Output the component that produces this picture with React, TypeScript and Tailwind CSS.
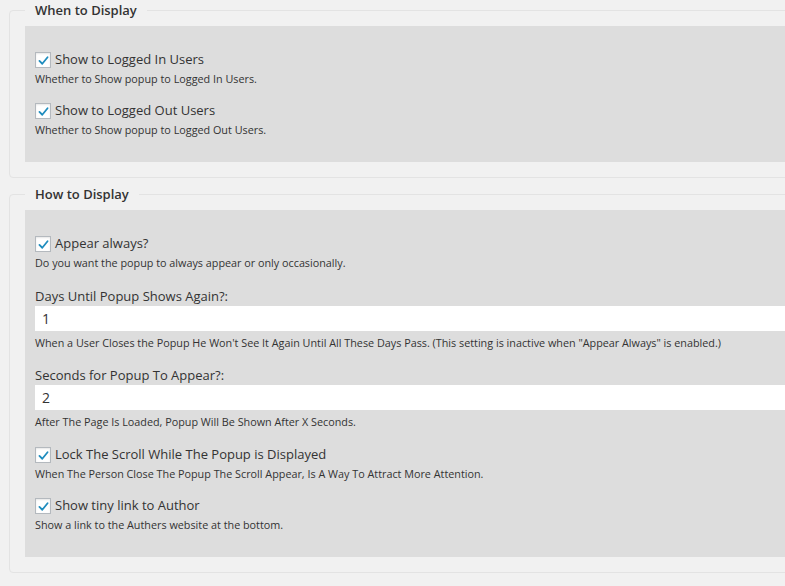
import React from 'react';

const Check: React.FC = () => (
  <span className="inline-flex h-4 w-4 shrink-0 items-center justify-center border border-[#b4b9be] bg-white shadow-[inset_0_1px_2px_rgba(0,0,0,0.1)]">
    <svg viewBox="0 0 16 16" className="h-[13px] w-[13px]">
      <path d="M3 8.5 L6.5 12 L13 4" fill="none" stroke="#1e8cbe" strokeWidth="2.2" strokeLinecap="round" strokeLinejoin="round" />
    </svg>
  </span>
);

const CheckItem: React.FC<{ label: string; desc: string; className?: string }> = ({ label, desc, className }) => (
  <div className={className}>
    <label className="flex h-5 items-center gap-1 text-[13px] text-[#333]">
      <Check />
      <span>{label}</span>
    </label>
    <p className="mt-[1px] text-[10.8px] leading-4 text-[#333]">{desc}</p>
  </div>
);

const TextItem: React.FC<{ label: string; value: string; desc: string; className?: string }> = ({ label, value, desc, className }) => (
  <div className={className}>
    <div className="h-5 text-[13px] leading-5 text-[#333]">{label}</div>
    <div className="flex h-[25px] items-center bg-white px-[7px] text-[14px] text-[#333]">{value}</div>
    <p className="mt-[4px] text-[10.8px] leading-4 text-[#333]">{desc}</p>
  </div>
);

const Section: React.FC<{ title: string; children: React.ReactNode; className?: string }> = ({ title, children, className }) => (
  <fieldset className={`w-[820px] rounded-[4px] border border-[#e3e3e3] pb-[15px] pl-[15px] ${className ?? ''}`}>
    <legend className="px-[10px] text-[13px] font-semibold leading-5 text-[#333]">{title}</legend>
    <div className="mt-[6px] bg-[#dddddd] pl-[10px] pt-[24px] pb-[24px]">{children}</div>
  </fieldset>
);

const App: React.FC = () => {
  return (
    <div className="h-[586px] w-[785px] overflow-hidden bg-[#f1f1f1] pl-[9px] font-['Open_Sans',sans-serif]">
      <Section title="When to Display">
        <CheckItem label="Show to Logged In Users" desc="Whether to Show popup to Logged In Users." />
        <CheckItem className="mt-[14px]" label="Show to Logged Out Users" desc="Whether to Show popup to Logged Out Users." />
      </Section>
      <Section title="How to Display" className="mt-[6px]">
        <CheckItem label="Appear always?" desc="Do you want the popup to always appear or only occasionally." />
        <TextItem
          className="mt-[15px]"
          label="Days Until Popup Shows Again?:"
          value="1"
          desc={'When a User Closes the Popup He Won\'t See It Again Until All These Days Pass. (This setting is inactive when "Appear Always" is enabled.)'}
        />
        <TextItem
          className="mt-[14px]"
          label="Seconds for Popup To Appear?:"
          value="2"
          desc="After The Page Is Loaded, Popup Will Be Shown After X Seconds."
        />
        <CheckItem
          className="mt-[15px]"
          label="Lock The Scroll While The Popup is Displayed"
          desc="When The Person Close The Popup The Scroll Appear, Is A Way To Attract More Attention."
        />
        <CheckItem className="mt-[14px]" label="Show tiny link to Author" desc="Show a link to the Authers website at the bottom." />
      </Section>
    </div>
  );
};

export default App;
